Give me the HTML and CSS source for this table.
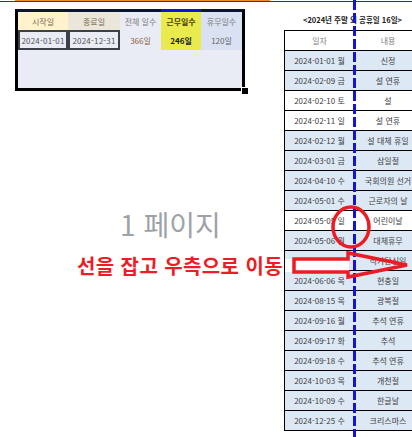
FILE: index.html
```html
<!DOCTYPE html>
<html lang="ko">
<head>
<meta charset="utf-8">
<link rel="stylesheet" href="styles.css">
</head>
<body>
<div class="rule-orange"></div>
<div class="rule-blue"></div>
<div class="page">
  <section class="left">
    <div class="summary">
      <div class="cell hd hd-start">시작일</div>
      <div class="cell hd hd-end">종료일</div>
      <div class="cell hd hd-total">전체 일수</div>
      <div class="cell hd hd-work">근무일수</div>
      <div class="cell hd hd-off">휴무일수</div>
      <div class="cell val date">2024-01-01</div>
      <div class="cell val date">2024-12-31</div>
      <div class="cell val total">366일</div>
      <div class="cell val work">246일</div>
      <div class="cell val off">120일</div>
      <div class="blank"></div>
      <span class="handle"></span>
    </div>
    <div class="watermark">1 페이지</div>
    <div class="hint">선을 잡고 우측으로 이동</div>
  </section>
  <section class="right">
    <div class="title">&lt;2024년 주말 외 공휴일 16일&gt;</div>
    <div class="holidays">
      <div class="row head"><div>일자</div><div>내용</div></div>
      <div class="row"><div>2024-01-01 월</div><div>신정</div></div>
      <div class="row"><div>2024-02-09 금</div><div>설 연휴</div></div>
      <div class="row weekend"><div>2024-02-10 토</div><div>설</div></div>
      <div class="row weekend"><div>2024-02-11 일</div><div>설 연휴</div></div>
      <div class="row"><div>2024-02-12 월</div><div>설 대체 휴일</div></div>
      <div class="row"><div>2024-03-01 금</div><div>삼일절</div></div>
      <div class="row"><div>2024-04-10 수</div><div>국회의원 선거</div></div>
      <div class="row"><div>2024-05-01 수</div><div>근로자의 날</div></div>
      <div class="row weekend"><div>2024-05-05 일</div><div>어린이날</div></div>
      <div class="row"><div>2024-05-06 월</div><div>대체휴무</div></div>
      <div class="row"><div>2024-05-15 수</div><div>석가탄신일</div></div>
      <div class="row"><div>2024-06-06 목</div><div>현충일</div></div>
      <div class="row"><div>2024-08-15 목</div><div>광복절</div></div>
      <div class="row"><div>2024-09-16 월</div><div>추석 연휴</div></div>
      <div class="row"><div>2024-09-17 화</div><div>추석</div></div>
      <div class="row"><div>2024-09-18 수</div><div>추석 연휴</div></div>
      <div class="row"><div>2024-10-03 목</div><div>개천절</div></div>
      <div class="row"><div>2024-10-09 수</div><div>한글날</div></div>
      <div class="row"><div>2024-12-25 수</div><div>크리스마스</div></div>
    </div>
  </section>
</div>
<div class="page-break"></div>
<svg class="overlay" width="412" height="437" viewBox="0 0 412 437">
  <ellipse cx="351" cy="227" rx="18" ry="20" fill="none" stroke="#ed1c24" stroke-width="3.5"/>
  <rect x="285" y="259" width="64" height="13" fill="#ffffff"/>
  <polygon points="294,259 348,259 348,253 407,265 348,277 348,272 294,272" fill="none" stroke="#ed1c24" stroke-width="3.5" stroke-linejoin="miter"/>
</svg>
</body>
</html>
```

FILE: styles.css
```css
* { box-sizing: border-box; }

html, body {
  margin: 0;
  padding: 0;
  background: #ffffff;
}

body {
  position: relative;
  width: 412px;
  height: 437px;
  overflow: hidden;
  font-family: "Noto Sans CJK KR", "Noto Sans", sans-serif;
}

.rule-orange {
  height: 1px;
  margin-left: 15px;
  width: 255px;
  background: #f08a24;
}

.rule-blue {
  height: 1px;
  background: #2233aa;
}

.page {
  display: flex;
}

.left {
  width: 284px;
  flex: none;
  padding-top: 7px;
}

.summary {
  position: relative;
  margin-left: 15px;
  width: 230px;
  display: grid;
  grid-template-columns: 50px 52px 41px 40px 41px;
  grid-template-rows: 18px 20px 38px;
  border: 3px solid #000000;
  border-top-color: #0d1430;
  background: #e9ebf5;
}

.cell {
  display: flex;
  align-items: center;
  justify-content: center;
  font-size: 8px;
  color: #666666;
  white-space: nowrap;
}

.hd-start { background: #fff2cc; color: #7a6a55; }
.hd-end { background: #ebe6da; color: #7a6a55; }
.hd-total { background: #e9ebf5; color: #7d7d7d; }
.hd-work { background: #e9eb4c; color: #4a3a10; font-weight: bold; position: relative; }
.hd-work::before {
  content: "";
  position: absolute;
  left: 0;
  right: 0;
  top: -3px;
  height: 3px;
  background: #1010e0;
}
.hd-off { background: #d9e1f2; color: #7d7d7d; }

.val.date {
  border: 2px solid #3c4049;
  background: #e9ebf5;
  color: #555555;
  letter-spacing: 0.2px;
}
.val.total { color: #8a5f3c; }
.val.work { background: #e9eb4c; color: #222222; font-weight: bold; }
.val.off { background: #d9e1f2; color: #666666; }

.blank {
  grid-column: 1 / -1;
}

.handle {
  position: absolute;
  right: -6px;
  bottom: -6px;
  width: 7px;
  height: 7px;
  background: #000000;
  border-left: 1px solid #ffffff;
  border-top: 1px solid #ffffff;
}

.watermark {
  margin-top: 119px;
  margin-left: 120px;
  font-size: 28px;
  line-height: 28px;
  color: #9ea2a8;
  white-space: nowrap;
}

.hint {
  margin-top: 17px;
  margin-left: 77px;
  font-size: 20px;
  line-height: 21px;
  letter-spacing: 0.4px;
  font-weight: bold;
  color: #ee1c25;
  white-space: nowrap;
}

.right {
  flex: none;
  width: 128px;
  overflow: hidden;
}

.title {
  width: 137px;
  margin-top: 13px;
  height: 10px;
  margin-bottom: 5px;
  font-size: 7.5px;
  line-height: 10px;
  font-weight: bold;
  text-align: center;
  color: #222222;
  white-space: nowrap;
}

.holidays {
  width: 137px;
  border-top: 1px solid #000000;
  border-left: 1.5px solid #000000;
}

.row {
  display: grid;
  grid-template-columns: 69px 68px;
  height: 20px;
  border-bottom: 1px solid #000000;
  background: #dde8f5;
}

.row.weekend,
.row.head {
  background: #ffffff;
}

.row > div {
  display: flex;
  align-items: center;
  justify-content: center;
  font-size: 8px;
  color: #404040;
  white-space: nowrap;
}

.row.head > div {
  color: #808080;
}

.page-break {
  position: absolute;
  left: 353px;
  top: 0;
  width: 2.5px;
  height: 437px;
  background: repeating-linear-gradient(to bottom, #1414d2 0 10px, transparent 10px 13px);
}

.overlay {
  position: absolute;
  left: 0;
  top: 0;
  pointer-events: none;
}
```
